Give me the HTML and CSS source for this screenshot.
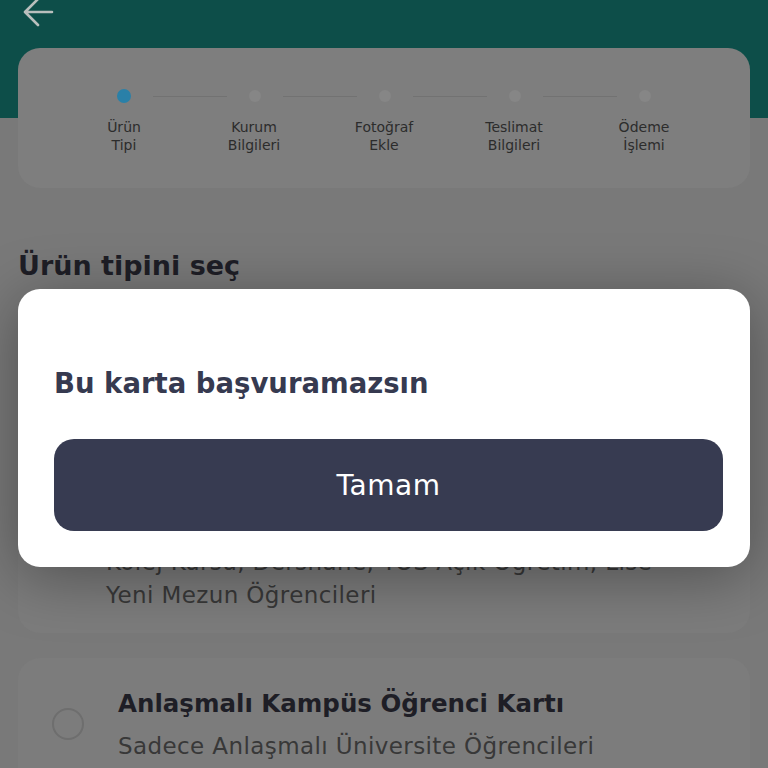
FILE: index.html
```html
<!DOCTYPE html>
<html lang="tr">
<head>
<meta charset="utf-8">
<link rel="stylesheet" href="styles.css">
</head>
<body>
<div class="screen">
  <header class="topbar">
    <svg class="back" width="34" height="32" viewBox="0 0 34 32" aria-hidden="true">
      <path d="M30 14 H4 M16 1 L3 14 L16 27" fill="none" stroke="#b9bfbd" stroke-width="2.6" stroke-linecap="round" stroke-linejoin="round"/>
    </svg>
  </header>

  <section class="stepper">
    <div class="dots">
      <span class="dot active"></span><span class="line"></span>
      <span class="dot"></span><span class="line"></span>
      <span class="dot"></span><span class="line"></span>
      <span class="dot"></span><span class="line"></span>
      <span class="dot"></span>
    </div>
    <div class="labels">
      <span>Ürün<br>Tipi</span>
      <span>Kurum<br>Bilgileri</span>
      <span>Fotoğraf<br>Ekle</span>
      <span>Teslimat<br>Bilgileri</span>
      <span>Ödeme<br>İşlemi</span>
    </div>
  </section>

  <h1 class="heading">Ürün tipini seç</h1>

  <div class="option first">
    <div class="opt-body">
      <div class="opt-title">Öğrenci Kartı</div>
      <div class="opt-sub">Lise, Ön Lisans, Lisans, Yüksek Lisans,<br>Kolej Kursu, Dershane, YÖS Açık Öğretim, Lise<br>Yeni Mezun Öğrencileri</div>
    </div>
  </div>

  <div class="option">
    <span class="radio"></span>
    <div class="opt-body">
      <div class="opt-title">Anlaşmalı Kampüs Öğrenci Kartı</div>
      <div class="opt-sub">Sadece Anlaşmalı Üniversite Öğrencileri</div>
    </div>
  </div>

  <div class="modal">
    <div class="modal-title">Bu karta başvuramazsın</div>
    <button class="modal-btn">Tamam</button>
  </div>
</div>
</body>
</html>
```

FILE: styles.css
```css
* { box-sizing: border-box; }
html, body { margin: 0; padding: 0; }
body {
  background: #797979;
  font-family: "DejaVu Sans", "Open Sans", sans-serif;
  width: 768px;
  height: 768px;
  overflow: hidden;
}
.screen {
  position: relative;
  width: 768px;
  height: 768px;
  overflow: hidden;
  background: #797979;
}
.topbar {
  height: 120px;
  background: #0d4e49;
  padding: 0 0 0 22px;
}
.back {
  display: block;
  margin-top: -2px;
}
.stepper {
  margin: -70px 18px 0;
  height: 140px;
  background: #7e7e7e;
  border-radius: 22px;
  padding: 41px 41px 0;
}
.dots {
  display: flex;
  align-items: center;
  padding: 0 58px;
  height: 14px;
}
.dot {
  width: 12px;
  height: 12px;
  border-radius: 50%;
  background: #868686;
  flex: none;
}
.dot.active {
  width: 14px;
  height: 14px;
  background: #2a80a8;
}
.line {
  flex: 1;
  height: 1px;
  background: #727272;
  margin: 0 22px;
}
.labels {
  display: grid;
  grid-template-columns: repeat(5, 130px);
  margin-top: 15px;
}
.labels span {
  text-align: center;
  font-size: 14px;
  line-height: 18px;
  color: #2c2c2c;
}
.heading {
  margin: 60px 18px 0;
  font-size: 27px;
  line-height: 36px;
  font-weight: 700;
  color: #1e1e26;
}
.option {
  margin: 20px 18px 0;
  background: #7c7c7c;
  border-radius: 22px;
  display: flex;
  align-items: center;
  padding: 26px 30px 26px 34px;
  gap: 34px;
}
.option.first {
  height: 327px;
  align-items: flex-end;
  padding: 24px 30px 21px 88px;
  margin-top: 22px;
}
.option.first + .option {
  margin-top: 25px;
}
.radio {
  width: 32px;
  height: 32px;
  border-radius: 50%;
  border: 2px solid #6e6e6e;
  flex: none;
}
.opt-title {
  font-size: 24.5px;
  line-height: 40px;
  font-weight: 700;
  color: #1e1e26;
}
.opt-sub {
  margin-top: 6px;
  font-size: 23px;
  line-height: 33px;
  letter-spacing: 0.4px;
  color: #383838;
}
.modal {
  position: absolute;
  top: 289px;
  left: 18px;
  width: 732px;
  height: 278px;
  background: #ffffff;
  border-radius: 22px;
  padding: 76px 27px 36px 36px;
  box-shadow: 0 10px 60px rgba(0, 0, 0, 0.35);
  display: flex;
  flex-direction: column;
}
.modal-title {
  font-size: 27.5px;
  line-height: 36px;
  font-weight: 700;
  color: #363a50;
}
.modal-btn {
  margin-top: 38px;
  height: 92px;
  width: 100%;
  border: 0;
  border-radius: 20px;
  background: #373b51;
  color: #ffffff;
  font-family: inherit;
  font-size: 28px;
  font-weight: 400;
  letter-spacing: 0.5px;
}
```
